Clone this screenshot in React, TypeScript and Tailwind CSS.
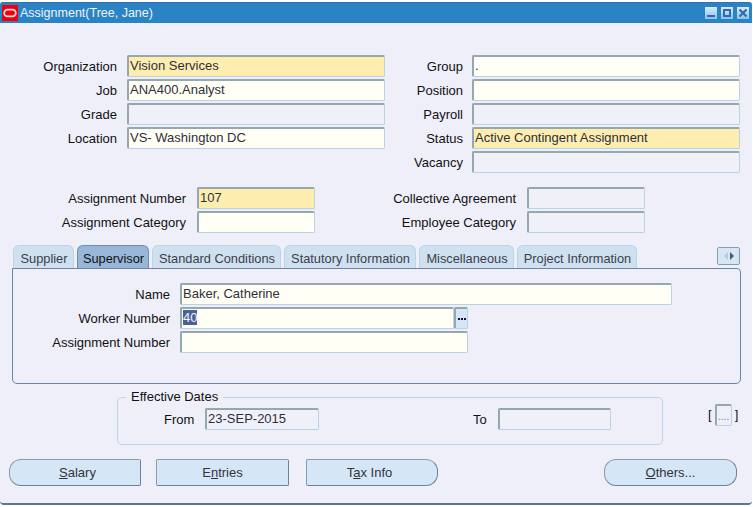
import React from "react";

const fieldBase =
  "box-border h-[22px] shrink-0 rounded-[2px] border border-[#b9d2e4] border-t-2 border-l-2 border-t-[#94a8ad] border-l-[#94a8ad] pl-[1px] leading-[18px] text-[#2f2f3a] whitespace-nowrap overflow-hidden";

const bgFor: Record<string, string> = {
  req: "bg-[#fdeeb0]",
  open: "bg-[#fffff6]",
  off: "bg-[#eff0f8]",
};

function Field({ w, kind = "open", value = "" }: { w: string; kind?: string; value?: string }) {
  return <div className={`${fieldBase} ${bgFor[kind]} ${w}`}>{value}</div>;
}

function Row({
  label,
  labelW,
  fieldW,
  kind,
  value,
  gap = "gap-[9px]",
}: {
  label: string;
  labelW: string;
  fieldW: string;
  kind?: string;
  value?: string;
  gap?: string;
}) {
  return (
    <div className={`flex h-[24px] items-center ${gap}`}>
      <div className={`${labelW} shrink-0 pt-[2px] text-right text-[#111] whitespace-nowrap`}>{label}</div>
      <Field w={fieldW} kind={kind} value={value} />
    </div>
  );
}

function Tab({ label, w, active }: { label: string; w: string; active?: boolean }) {
  return (
    <div
      className={`${w} box-border h-[23px] shrink-0 rounded-t-[6px] border border-b-0 pl-[1px] text-center text-[12.8px] leading-[25px] whitespace-nowrap ${
        active
          ? "border-[#6f8fb0] bg-[#98b7d8] text-[#111]"
          : "border-[#bcd4e8] bg-[#cfe0f0] text-[#3a3f4a]"
      }`}
    >
      {label}
    </div>
  );
}

function Btn({ w, shape, children }: { w: string; shape: string; children: React.ReactNode }) {
  return (
    <div
      className={`${w} ${shape} box-border flex h-[27px] shrink-0 items-center justify-center border border-[#8a9cab] border-b-[#6e8296] border-r-[#6e8296] bg-[#d5e6f6] text-[#33333d]`}
    >
      {children}
    </div>
  );
}

export default function App() {
  return (
    <div className="h-[507px] w-[753px] overflow-hidden bg-white pt-[2px] text-[13px] [font-family:'Liberation_Sans',Arial,sans-serif]">
      <div className="box-border flex h-[503px] w-[752px] flex-col rounded-t-[3px] rounded-b-[4px] border-b-2 border-b-[#5f7590] bg-[#eeeff9]">
        {/* Title bar */}
        <div className="flex h-[21px] shrink-0 items-center rounded-t-[3px] border-t border-t-[#3a6ea5] bg-[#2a83c4] pl-[2px] pr-[2px] text-[12.5px] text-[#eef4fa]">
          <div className="flex h-[16px] w-[16px] shrink-0 items-center justify-center bg-[#f0000f]">
            <svg width="14" height="10" viewBox="0 0 14 10">
              <rect x="1.2" y="1.6" width="11.6" height="6.8" rx="3.4" fill="none" stroke="#fbdcdc" strokeWidth="1.8" />
            </svg>
          </div>
          <span className="ml-[2px]">Assignment(Tree, Jane)</span>
          <div className="ml-auto flex items-center gap-[4px] pr-[1px]">
            <div className="flex h-[12px] w-[12px] items-end justify-center bg-gradient-to-b from-[#d8ebf8] to-[#8fc0e6] pb-[2px]">
              <div className="h-[2px] w-[8px] bg-[#2a6cad]" />
            </div>
            <div className="flex h-[12px] w-[12px] items-center justify-center bg-gradient-to-b from-[#d8ebf8] to-[#8fc0e6]">
              <div className="box-border h-[8px] w-[8px] border-2 border-[#2a6cad]" />
            </div>
            <div className="flex h-[12px] w-[12px] items-center justify-center bg-gradient-to-b from-[#d8ebf8] to-[#8fc0e6]">
              <svg width="10" height="10" viewBox="0 0 10 10">
                <path d="M1.5 1.5 L8.5 8.5 M8.5 1.5 L1.5 8.5" stroke="#2a6cad" strokeWidth="2.2" />
              </svg>
            </div>
          </div>
        </div>

        {/* Main fields */}
        <div className="flex pt-[31px]">
          <div className="flex flex-col">
            <Row label="Organization" labelW="w-[117px]" gap="gap-[10px]" fieldW="w-[258px]" kind="req" value="Vision Services" />
            <Row label="Job" labelW="w-[117px]" gap="gap-[10px]" fieldW="w-[258px]" value="ANA400.Analyst" />
            <Row label="Grade" labelW="w-[117px]" gap="gap-[10px]" fieldW="w-[258px]" kind="off" />
            <Row label="Location" labelW="w-[117px]" gap="gap-[10px]" fieldW="w-[258px]" value="VS- Washington DC" />
          </div>
          <div className="flex flex-col">
            <Row label="Group" labelW="w-[78px]" fieldW="w-[268px]" value="." />
            <Row label="Position" labelW="w-[78px]" fieldW="w-[268px]" />
            <Row label="Payroll" labelW="w-[78px]" fieldW="w-[268px]" kind="off" />
            <Row label="Status" labelW="w-[78px]" fieldW="w-[268px]" kind="req" value="Active Contingent Assignment" />
            <Row label="Vacancy" labelW="w-[78px]" fieldW="w-[268px]" kind="off" />
          </div>
        </div>

        {/* Assignment */}
        <div className="flex pt-[12px]">
          <div className="flex flex-col">
            <Row label="Assignment Number" labelW="w-[186px]" gap="gap-[11px]" fieldW="w-[118px]" kind="req" value="107" />
            <Row label="Assignment Category" labelW="w-[186px]" gap="gap-[11px]" fieldW="w-[118px]" />
          </div>
          <div className="ml-[69px] flex flex-col">
            <Row label="Collective Agreement" labelW="w-[132px]" gap="gap-[11px]" fieldW="w-[118px]" kind="off" />
            <Row label="Employee Category" labelW="w-[132px]" gap="gap-[11px]" fieldW="w-[118px]" kind="off" />
          </div>
        </div>

        {/* Tabs */}
        <div className="flex items-start pl-[12px] pr-[12px] pt-[11px]">
          <div className="flex gap-[3px] pl-[1px]">
            <Tab label="Supplier" w="w-[61px]" />
            <Tab label="Supervisor" w="w-[72px]" active />
            <Tab label="Standard Conditions" w="w-[129px]" />
            <Tab label="Statutory Information" w="w-[132px]" />
            <Tab label="Miscellaneous" w="w-[95px]" />
            <Tab label="Project Information" w="w-[120px]" />
          </div>
          <div className="ml-auto mt-[2px] flex h-[18px] w-[23px] items-center justify-center gap-[2px] rounded-[2px] border border-[#8a9cab] bg-[#d5e6f6]">
            <svg width="4" height="8" viewBox="0 0 4 8"><path d="M4 0 V8 L0 4 Z" fill="#b5cbdd" /></svg>
            <svg width="4" height="8" viewBox="0 0 4 8"><path d="M0 0 V8 L4 4 Z" fill="#4a5a6a" /></svg>
          </div>
        </div>

        {/* Tab panel */}
        <div className="ml-[12px] mr-[11px] box-border flex h-[116px] shrink-0 flex-col rounded-b-[5px] rounded-tr-[4px] border border-[#6d84a3] pt-[13px]">
          <div className="flex h-[24px] items-center gap-[10px]">
            <div className="w-[157px] shrink-0 pt-[2px] text-right text-[#111]">Name</div>
            <Field w="w-[492px]" value="Baker, Catherine" />
          </div>
          <div className="flex h-[24px] items-center gap-[10px]">
            <div className="w-[157px] shrink-0 pt-[2px] text-right text-[#111]">Worker Number</div>
            <div className={`${fieldBase} ${bgFor.open} w-[274px]`}>
              <span className="bg-[#4a6394] text-[#f4f4ff]">40</span>
            </div>
            <div className="-ml-[10px] box-border flex h-[22px] w-[14px] shrink-0 items-center justify-center rounded-[2px] border border-[#b9d2e4] border-l-2 border-t-2 border-l-[#94a8ad] border-t-[#94a8ad] bg-[#d5e6f6]">
              <svg width="8" height="2" viewBox="0 0 8 2"><path d="M0 0h2v2H0zM3 0h2v2H3zM6 0h2v2H6z" fill="#1a1030" /></svg>
            </div>
          </div>
          <div className="flex h-[24px] items-center gap-[10px]">
            <div className="w-[157px] shrink-0 pt-[2px] text-right text-[#111]">Assignment Number</div>
            <Field w="w-[288px]" />
          </div>
        </div>

        {/* Effective Dates */}
        <div className="flex items-start pt-[6px]">
          <fieldset className="ml-[117px] box-border h-[55px] w-[546px] shrink-0 rounded-[5px] border border-[#bcd4e8] pl-[8px]">
            <legend className="px-[5px] leading-[14px] text-[#111]">Effective Dates</legend>
            <div className="flex h-[24px] items-center pt-[5px]">
              <div className="ml-[38px] w-[30px] shrink-0 pt-[2px] text-[#111]">From</div>
              <div className="ml-[11px]"><Field w="w-[114px]" kind="off" value="23-SEP-2015" /></div>
              <div className="ml-[154px] w-[14px] shrink-0 pt-[2px] text-[#111]">To</div>
              <div className="ml-[11px]"><Field w="w-[113px]" kind="off" /></div>
            </div>
          </fieldset>
          <div className="ml-[45px] mt-[14px] flex items-center gap-[3px] text-[#111]">
            <span>[</span>
            <div className="box-border flex h-[22px] w-[17px] items-end justify-center rounded-[2px] border border-[#b9d2e4] border-l-2 border-t-2 border-l-[#94a8ad] border-t-[#94a8ad] pb-[3px] text-[10px] leading-[10px] text-[#6a7f95]">
              ....
            </div>
            <span>]</span>
          </div>
        </div>

        {/* Buttons */}
        <div className="flex items-center pl-[9px] pt-[14px]">
          <Btn w="w-[132px]" shape="rounded-l-[12px] rounded-r-[2px]">
            <span className="pl-[5px]"><u>S</u>alary</span>
          </Btn>
          <div className="ml-[15px]">
            <Btn w="w-[133px]" shape="rounded-[2px]">
              <span>E<u>n</u>tries</span>
            </Btn>
          </div>
          <div className="ml-[17px]">
            <Btn w="w-[132px]" shape="rounded-l-[2px] rounded-r-[12px]">
              <span className="pr-[5px]">T<u>a</u>x Info</span>
            </Btn>
          </div>
          <div className="ml-[166px]">
            <Btn w="w-[133px]" shape="rounded-[12px]">
              <span><u>O</u>thers...</span>
            </Btn>
          </div>
        </div>
      </div>
    </div>
  );
}
